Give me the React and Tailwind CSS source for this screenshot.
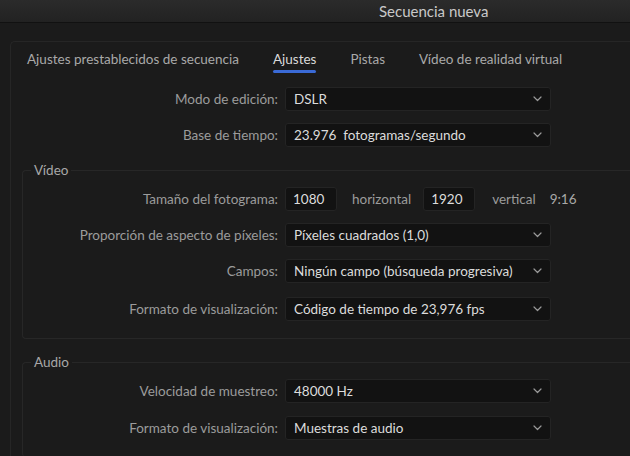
import React, { useState } from 'react';

const Chevron = () => (
  <svg width="9" height="6" viewBox="0 0 9 6" fill="none" stroke="currentColor" strokeWidth="1.2" strokeLinecap="round" strokeLinejoin="round">
    <path d="M1 1l3.5 3.5L8 1" />
  </svg>
);

const Select = ({ value }) => (
  <div className="flex items-center justify-between w-[266px] h-[24px] pl-[8px] pr-[8px] bg-[#121212] border border-[#242424] rounded-[3px] text-[#dcdcdc]">
    <span className="whitespace-pre">{value}</span>
    <span className="text-[#9a9a9a]"><Chevron /></span>
  </div>
);

const NumField = ({ value }) => (
  <div className="flex items-center w-[52px] h-[24px] pl-[7px] bg-[#121212] border border-[#242424] rounded-[3px] text-[#dcdcdc]">
    {value}
  </div>
);

const Row = ({ label, labelW, children, extra = '' }) => (
  <div className={`flex items-center gap-[7px] ${extra}`}>
    <div className="text-right text-[#9c9c9c] shrink-0" style={{ width: labelW }}>{label}</div>
    {children}
  </div>
);

const Group = ({ title, children, bottom }) => (
  <fieldset className={`ml-[11px] w-[700px] border border-r-0 border-[#272727] rounded-l-[4px] ${bottom ? '' : 'border-b-0'}`}>
    <legend className="ml-[8px] px-[3px] h-[20px] leading-[20px] text-[#a8a8a8]">{title}</legend>
    <div className="flex flex-col gap-[12px] pt-[7px] pb-[17px]">{children}</div>
  </fieldset>
);

export default function App() {
  const [tab, setTab] = useState('Ajustes');
  const tabs = ['Ajustes prestablecidos de secuencia', 'Ajustes', 'Pistas', 'Vídeo de realidad virtual'];

  return (
    <div className="w-[630px] h-[456px] overflow-hidden bg-[#1b1b1b] text-[13.5px]" style={{ fontFamily: 'Lato, "Open Sans", sans-serif' }}>
      <div className="h-[23px] flex items-center pl-[379px] bg-gradient-to-b from-[#2b2b2b] to-[#222222] border-b border-[#111111] text-[15px] text-[#c9c9c9]">
        Secuencia nueva
      </div>

      <div className="pl-[10px] pt-[18px]">
        <div className="border-l border-t border-[#262626] rounded-tl-[5px] h-[420px]">
          <div className="flex items-start pl-[16px] pt-[7px] h-[31px] gap-[34px]">
            {tabs.map(t => (
              <button key={t} onClick={() => setTab(t)} className="flex flex-col items-center">
                <span className={tab === t ? 'text-[#dadada]' : 'text-[#a9a9a9]'}>{t}</span>
                <span className={`mt-[1px] h-[3px] w-full rounded-full ${tab === t ? 'bg-[#3a6ad6]' : 'bg-transparent'}`}></span>
              </button>
            ))}
          </div>

          <div className="flex flex-col gap-[12px] pt-[14px]">
            <Row label="Modo de edición:" labelW={267}><Select value="DSLR" /></Row>
            <Row label="Base de tiempo:" labelW={267}><Select value="23.976  fotogramas/segundo" /></Row>
          </div>

          <div className="mt-[13px]">
            <Group title="Vídeo" bottom>
              <Row label="Tamaño del fotograma:" labelW={255}>
                <div className="flex items-center">
                  <NumField value="1080" />
                  <span className="ml-[15px] mr-[12px] text-[#9c9c9c]">horizontal</span>
                  <NumField value="1920" />
                  <span className="ml-[17px] text-[#9c9c9c]">vertical</span>
                  <span className="ml-[14px] text-[#a8a8a8]">9:16</span>
                </div>
              </Row>
              <Row label="Proporción de aspecto de píxeles:" labelW={255}><Select value="Píxeles cuadrados (1,0)" /></Row>
              <Row label="Campos:" labelW={255}><Select value="Ningún campo (búsqueda progresiva)" /></Row>
              <Row label="Formato de visualización:" labelW={255} extra="mt-[2px]"><Select value="Código de tiempo de 23,976 fps" /></Row>
            </Group>
          </div>

          <div className="mt-[13px]">
            <Group title="Audio">
              <Row label="Velocidad de muestreo:" labelW={255}><Select value="48000 Hz" /></Row>
              <Row label="Formato de visualización:" labelW={255} extra="mt-[1px]"><Select value="Muestras de audio" /></Row>
            </Group>
          </div>
        </div>
      </div>
    </div>
  );
}
